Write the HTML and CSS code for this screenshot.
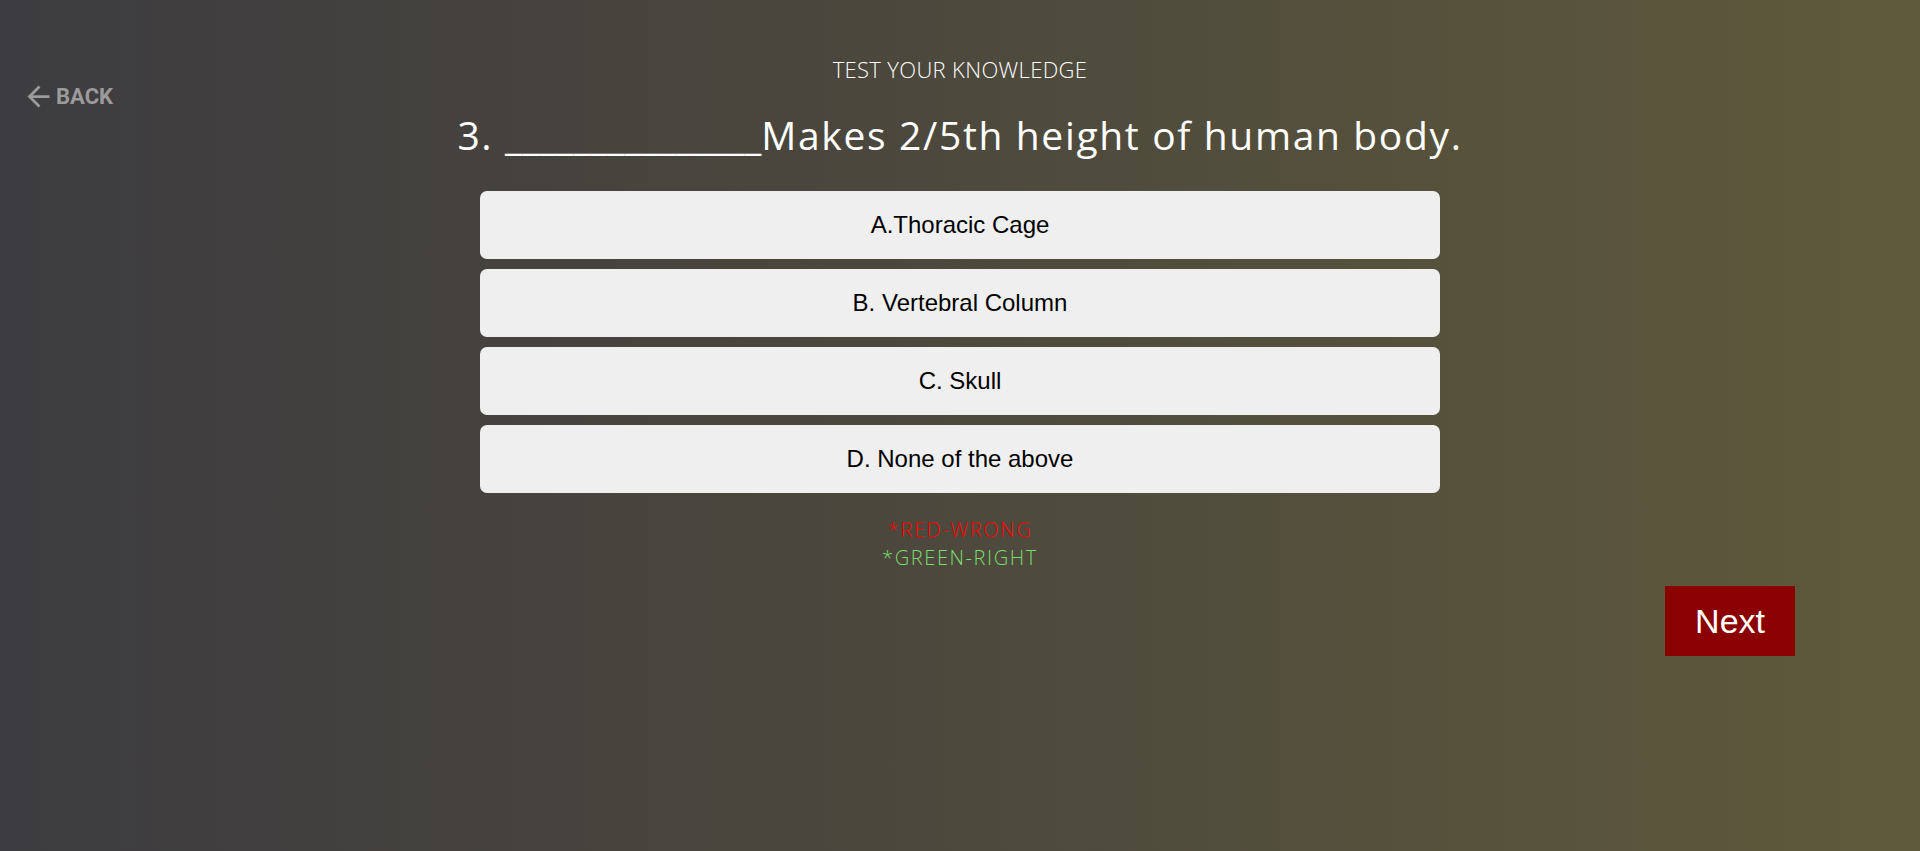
FILE: index.html
```html
<!DOCTYPE html>
<html lang="en">
<head>
<meta charset="utf-8">
<title>Test your knowledge</title>
<link rel="stylesheet" href="styles.css">
</head>
<body>
<div class="page">
  <a class="back" href="#">
    <svg class="back-icon" viewBox="0 0 24 24" aria-hidden="true"><path d="M20 11H7.83l5.59-5.59L12 4l-8 8 8 8 1.41-1.41L7.83 13H20v-2z"/></svg>
    <span class="back-label">BACK</span>
  </a>
  <main class="quiz">
    <p class="eyebrow">TEST YOUR KNOWLEDGE</p>
    <h1 class="question">3. <span class="blank">_______________</span>Makes 2/5th height of human body.</h1>
    <div class="options">
      <button class="option">A.Thoracic Cage</button>
      <button class="option">B. Vertebral Column</button>
      <button class="option">C. Skull</button>
      <button class="option">D. None of the above</button>
    </div>
    <div class="legend">
      <span class="legend-wrong">*RED-WRONG</span>
      <span class="legend-right">*GREEN-RIGHT</span>
    </div>
  </main>
  <div class="actions">
    <button class="next">Next</button>
  </div>
</div>
</body>
</html>
```

FILE: styles.css
```css
* { box-sizing: border-box; }

html, body {
  margin: 0;
  padding: 0;
}

body {
  min-height: 851px;
  background: linear-gradient(to right, #3d3c40 0%, #4b473d 45%, #5f5a3b 100%);
  font-family: "Open Sans", "Liberation Sans", sans-serif;
  color: #ffffff;
}

.page {
  display: grid;
  grid-template-columns: 480px 960px 480px;
  grid-template-rows: auto auto;
}

.back {
  grid-column: 1;
  grid-row: 1;
  align-self: start;
  justify-self: start;
  display: flex;
  align-items: center;
  height: 33px;
  margin-top: 80px;
  margin-left: 22px;
  color: #9b9b9b;
  text-decoration: none;
}

.back-icon {
  width: 33px;
  height: 33px;
  fill: #9b9b9b;
  flex: none;
}

.back-label {
  font-family: Roboto, "Liberation Sans", sans-serif;
  font-weight: 700;
  font-size: 22px;
  line-height: 24px;
  margin-left: 1px;
}

.quiz {
  grid-column: 2;
  grid-row: 1;
  display: flex;
  flex-direction: column;
  align-items: center;
  padding-top: 56px;
}

.eyebrow {
  margin: 0;
  font-size: 22px;
  line-height: 27px;
  font-weight: 300;
  letter-spacing: 0.35px;
  white-space: nowrap;
}

.question {
  margin: 29px 0 0;
  font-size: 39px;
  line-height: 45px;
  font-weight: 500;
  letter-spacing: 1.65px;
  white-space: nowrap;
}

.blank {
  letter-spacing: 0;
}

.options {
  margin-top: 34px;
  width: 960px;
  display: flex;
  flex-direction: column;
  gap: 10px;
}

.option {
  display: block;
  width: 100%;
  height: 68px;
  border: none;
  border-radius: 7px;
  background: #efefef;
  color: #000000;
  font-family: "Liberation Sans", Arial, sans-serif;
  font-size: 24px;
  padding: 0;
  cursor: pointer;
}

.legend {
  margin-top: 23px;
  display: flex;
  flex-direction: column;
  align-items: center;
  font-size: 20px;
  line-height: 27.5px;
  font-weight: 300;
  letter-spacing: 1.6px;
}

.legend-wrong,
.legend-right {
  display: block;
  height: 27.5px;
  white-space: nowrap;
}

.legend-wrong { color: #ff0000; }
.legend-right { color: #7ddc6f; }

.actions {
  grid-column: 3;
  grid-row: 2;
  display: flex;
  justify-content: flex-end;
  padding-right: 125px;
  margin-top: 15px;
}

.next {
  height: 70px;
  padding: 0 30px;
  border: none;
  background: #8b0000;
  color: #ffffff;
  font-family: "Liberation Sans", Arial, sans-serif;
  font-size: 34px;
  line-height: 70px;
  cursor: pointer;
}
```
